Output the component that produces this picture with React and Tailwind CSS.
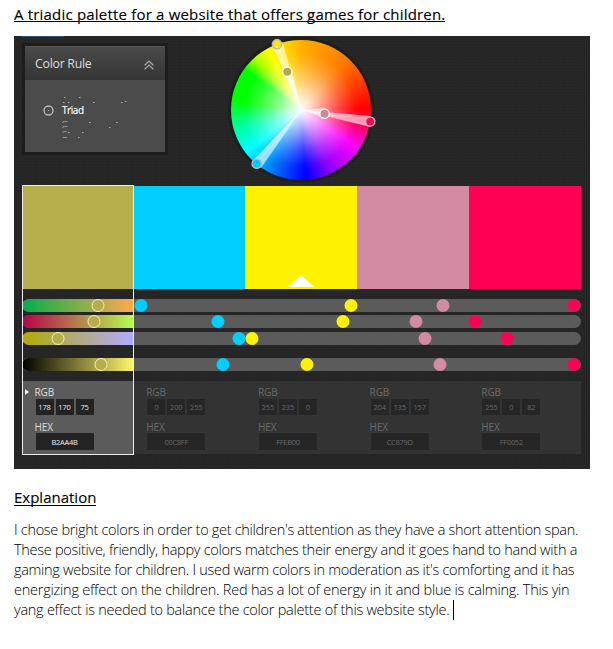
import React from "react";

const SWATCHES = [
  { fill: "bg-[#b6ad4b]", rgb: [178, 170, 75], hex: "B2AA4B", active: true },
  { fill: "bg-[#00ceff]", rgb: [0, 200, 255], hex: "00C8FF" },
  { fill: "bg-[#fff200]", rgb: [255, 235, 0], hex: "FFEB00", base: true },
  { fill: "bg-[#d28ba2]", rgb: [204, 135, 157], hex: "CC879D" },
  { fill: "bg-[#ff0054]", rgb: [255, 0, 82], hex: "FF0052" },
];

const KNOBS = ["bg-[#b6ad4b] border border-[#f5efc0]", "bg-[#00ceff]", "bg-[#fff200]", "bg-[#d28ba2]", "bg-[#ff0054]"];

// Knob centres are measured from the left end of the slider track.
const SLIDERS = [
  { ramp: "from-[#00b04b] to-[#ffaa4b]", at: [75.5, 118.5, 328.5, 420.5, 551.5], gap: "mb-[3.5px]" },
  { ramp: "from-[#b8004b] to-[#b2ff4b]", at: [72, 196, 320.5, 394, 453], gap: "mb-[3.5px]" },
  { ramp: "from-[#b2aa00] to-[#b2aaff]", at: [35.5, 217, 229.5, 402.5, 485], gap: "mb-[13.5px]" },
  { ramp: "from-black to-[#fff56c]", at: [79, 200.5, 284.5, 418, 551.5], gap: "" },
];

const SPECKS = [
  [64, 97], [79, 97], [63, 102], [68, 102], [93, 102], [121, 102], [125, 101], [70, 107],
  [89, 122], [116, 122], [109, 127], [68, 132], [82, 132], [78, 137],
];

function RuleCard() {
  return (
    <div className="relative ml-[8px] mt-[7px] h-[112px] w-[146px] border-[3px] border-[#1d1d1d] bg-[#4b4b4b]">
      <div className="flex h-[34px] items-center justify-between border-t border-[#555] bg-linear-to-b from-[#4a4a4a] to-[#353535] pl-[10px] pr-[11px] pt-[2px]">
        <span className="text-[12.3px] tracking-[-0.25px] text-[#ddd]">Color Rule</span>
        <svg width="10" height="10" viewBox="0 0 10 10" fill="none" stroke="#aaa" strokeWidth="1.2">
          <path d="M.7 5.2 5 1l4.300 4.200M.7 9.200 5 5l4.300 4.200" />
        </svg>
      </div>
      <div className="flex h-[61px] items-center pl-[18px]">
        <svg width="11" height="11" viewBox="0 0 11 11" fill="none" stroke="#bbb" strokeWidth="1.3">
          <circle cx="5.500" cy="5.500" r="4.500" />
          <circle cx="5.500" cy="5.500" r=".6" fill="#bbb" stroke="none" />
        </svg>
        <span className="ml-[8px] text-[10px] tracking-[-0.45px] text-white [-webkit-text-stroke:0.15px]">Triad</span>
      </div>
      <svg className="absolute left-0 top-0" width="140" height="106" viewBox="25 46 140 106">
        {SPECKS.map(([x, y]) => (
          <rect key={x + "-" + y} x={x} y={y} width="1.500" height="1" fill="#aaa" />
        ))}
        <path d="M62.500 123q0-1.500 2-1.500h3M62.500 128q0-1.500 2-1.500h3M62.500 133q0-1.500 2-1.500h2M63 137.500h4" fill="none" stroke="#aaa" strokeWidth=".8" />
      </svg>
    </div>
  );
}

function Wheel() {
  return (
    <div className="relative ml-[60px] mt-px size-[146px] rounded-full bg-[#1e1e1e] p-[3px]">
      <div className="size-[140px] rounded-full bg-[radial-gradient(closest-side,#fff_0%,#ffffffd0_14%,#ffffff80_36%,#ffffff38_58%,#ffffff08_78%,transparent_86%),conic-gradient(#ffb000_0deg,#ff7a00_42deg,#ff0000_88deg,#ff0068_105deg,#ff00ff_124deg,#9000ff_154deg,#0000ff_176deg,#0020ff_184deg,#0080ff_208deg,#00ffff_232deg,#00ff90_258deg,#00ff00_278deg,#00ff00_306deg,#a0ff00_317deg,#ffff00_331deg,#ffb000_360deg)]" />
      <svg className="absolute left-[-1px] top-[-1px]" width="150" height="150" viewBox="227 36 150 150">
        <g fill="#fff" fillOpacity=".6">
          <path d="M301.500 110 272 45l10.500-3z" />
          <path d="m301.500 110-49 51 8.500 7z" />
          <path d="m301.500 110 69 6v11z" />
        </g>
        <path d="M301.500 110 283 73l9-2zM301.500 110l22-2v10z" fill="#fff" fillOpacity=".5" />
        <g stroke="#b9b9b9" strokeWidth="1.500">
          <circle cx="277" cy="44.200" r="4.600" fill="#ffe600" />
          <circle cx="256.700" cy="163.700" r="4.600" fill="#00c8ff" />
          <circle cx="370.200" cy="121.500" r="4.600" fill="#ff0052" />
        </g>
        <path d="m277 45.500-1.200 2h2.400z" fill="#fff" />
        <g stroke="#fff" strokeWidth="1.300">
          <circle cx="287.300" cy="71.800" r="4.700" fill="#b2aa4b" />
          <circle cx="324.500" cy="113.700" r="4.700" fill="#cc879d" />
        </g>
      </svg>
    </div>
  );
}

function Slider({ ramp, at, gap }) {
  return (
    <div className={"relative h-[13px] overflow-hidden rounded-full bg-[#5b5b5b] " + gap}>
      <div className={"h-full w-[111px] rounded-l-full bg-linear-to-r/srgb " + ramp} />
      {at.map((x, i) => (
        <span key={i} className={"absolute top-0 size-[13px] -translate-x-1/2 rounded-full " + KNOBS[i]} style={{ left: x }} />
      ))}
    </div>
  );
}

function Values({ rgb, hex, active }) {
  const tone = active ? "bg-[#5b5b5b] text-[#ddd]" : "bg-[#333] text-[#6a6a6a]";
  const field = active ? "bg-[#232323] text-[#eee]" : "bg-[#262626] text-[#666]";
  return (
    <div className={"relative h-[73px] flex-1 pl-[12.500px] pt-[5px] " + tone}>
      {active && <span className="absolute left-[3px] top-[8px] border-y-[3px] border-l-[4px] border-y-transparent border-l-white" />}
      <div className="h-[13px] text-[10px] leading-[13px] tracking-[-0.1px]">RGB</div>
      <div className="ml-px flex gap-[2px]">
        {rgb.map((v, i) => (
          <span key={i} className={"h-[16px] w-[18px] text-center text-[7.500px] leading-[17px] tracking-[-0.2px] " + field}>{v}</span>
        ))}
      </div>
      <div className="mt-[5px] h-[13px] text-[10px] leading-[15px] tracking-[-0.1px]">HEX</div>
      <div className={"ml-px h-[17px] w-[58px] text-center text-[7.500px] leading-[18px] tracking-[-0.3px] " + field}>{hex}</div>
    </div>
  );
}

const LINES = [
  ["I chose bright colors in order to get children's attention as they have a short attention span.", "tracking-[-0.31px]"],
  ["These positive, friendly, happy colors matches their energy and it goes hand to hand with a", "tracking-[-0.28px]"],
  ["gaming website for children. I used warm colors in moderation as it's comforting and it has", "tracking-[-0.3px]"],
  ["energizing effect on the children. Red has a lot of energy in it and blue is calming. This yin", "tracking-[-0.23px]"],
  ["yang effect is needed to balance the color palette of this website style.", "tracking-[-0.26px]"],
];

export default function App() {
  return (
    <main className="h-[649px] w-[613px] overflow-hidden bg-white pl-[14px] font-['Open_Sans',sans-serif] text-black">
      <h1 className="h-[36px] whitespace-nowrap pt-[4px] text-[15px] leading-[20px]">
        <span className="inline-block h-[17px] border-b border-black leading-[18px] tracking-[0.19px] [-webkit-text-stroke:0.12px]">A triadic palette for a website that offers games for children.</span>
      </h1>
      <section className="h-[433px] w-[576px] bg-[#272727] bg-[repeating-linear-gradient(90deg,#0000_0_2px,#0000000c_2px_3px),repeating-linear-gradient(#0000_0_2px,#0000000c_2px_3px)]">
        <div className="relative flex h-[149px]">
          <span className="absolute left-[8px] top-0 h-px w-[42px] bg-[#31506b]" />
          <RuleCard />
          <Wheel />
        </div>
        <div className="relative ml-[8px] w-[559px]">
          <div className="flex h-[104px] w-[558.5px] pt-px">
            {SWATCHES.map((s) => (
              <div key={s.hex} className={"flex flex-1 items-end justify-center " + s.fill}>
                {s.base && <span className="mb-[2px] border-x-[13px] border-b-[12px] border-x-transparent border-b-white" />}
              </div>
            ))}
          </div>
          <div className="pt-[9.5px]">
            {SLIDERS.map((s, i) => <Slider key={i} {...s} />)}
          </div>
          <div className="mt-[9.5px] flex w-[558.5px]">
            {SWATCHES.map((s) => <Values key={s.hex} {...s} />)}
          </div>
          <div className="absolute left-0 top-0 h-[270px] w-[112px] border border-[#eee]" />
        </div>
      </section>
      <h2 className="mt-[18px] h-[33px] whitespace-nowrap text-[15px] leading-[20px]">
        <span className="inline-block h-[18px] border-b border-black leading-[18px] [-webkit-text-stroke:0.12px]">Explanation</span>
      </h2>
      <div className="whitespace-nowrap text-[14.5px] font-light leading-[20px]">
        {LINES.map(([text, tracking], i) => (
          <p key={i} className="flex h-[20px]">
            <span className={tracking}>{text}</span>
            {i === 4 && <span className="ml-[4px] h-[20px] w-px bg-black" />}
          </p>
        ))}
      </div>
    </main>
  );
}
